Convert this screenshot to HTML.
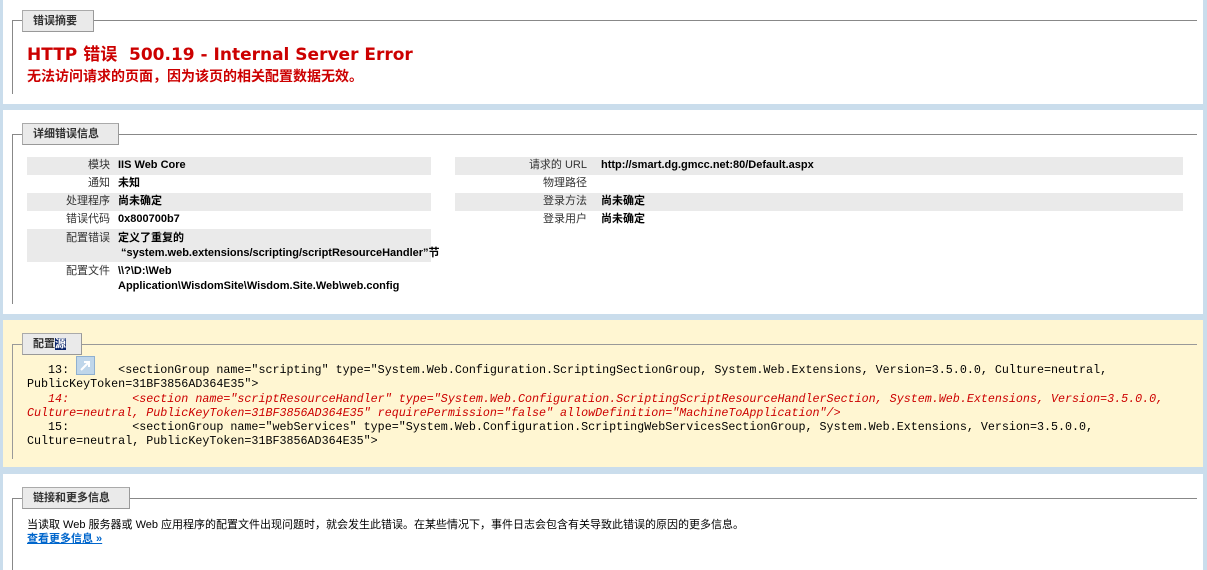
<!DOCTYPE html>
<html><head><meta charset="utf-8"><style>
*{margin:0;padding:0;box-sizing:border-box}
html,body{width:1207px;height:570px;overflow:hidden}
body{background:#CADDEC;position:relative;font-family:"Liberation Sans","Noto Sans CJK SC",sans-serif;font-size:11px;color:#000}
.p{position:absolute;left:3px;width:1200px;background:#fff;overflow:hidden}
.fs{position:absolute;left:9px;width:1185px;border-top:1px solid #888;border-left:1px solid #888}
.lg{position:absolute;background:#EAEAEA;border:1px solid #aaa;border-right-color:#999;border-bottom-color:#999;font-weight:bold;font-size:11px;color:#333;padding-left:10px;line-height:20px;height:22px}
.a{position:absolute;white-space:nowrap}
.row{position:absolute;height:18px;line-height:17px;white-space:nowrap}
.g{background:#EAEAEA}
.l{position:absolute;text-align:right;color:#333;line-height:15px}
.v{position:absolute;font-weight:bold;line-height:15px}
.code{position:absolute;left:27px;font-family:"Liberation Mono",monospace;font-size:11.7px;line-height:14.3px;white-space:pre}
.red{color:#C00;font-style:italic}
</style></head><body>
<div class="p" style="top:0;height:104px">
 <div class="fs" style="top:20px;height:74px"></div>
 <div class="lg" style="left:19px;top:10px;width:72px">错误摘要</div>
 <div class="a" style="left:24px;top:40px;color:#C00;font-weight:bold;font-size:17px;font-family:'DejaVu Sans','Noto Sans CJK SC',sans-serif">HTTP 错误 &nbsp;500.19 - Internal Server Error</div>
 <div class="a" style="left:24px;top:66px;color:#C00;font-weight:bold;font-size:14px">无法访问请求的页面，因为该页的相关配置数据无效。</div>
</div>
<div class="p" style="top:110px;height:204px">
 <div class="fs" style="top:24px;height:170px"></div>
 <div class="lg" style="left:19px;top:13px;width:97px">详细错误信息</div>
</div>
<div class="row g" style="left:27px;top:157px;width:404px"></div>
<div class="row g" style="left:27px;top:193px;width:404px"></div>
<div class="row g" style="left:27px;top:229px;width:404px;height:33px"></div>
<div class="row g" style="left:455px;top:157px;width:728px"></div>
<div class="row g" style="left:455px;top:193px;width:728px"></div>
<div class="l" style="left:30px;width:80px;top:158px">模块</div><div class="v" style="left:118px;top:158px">IIS Web Core</div>
<div class="l" style="left:30px;width:80px;top:176px">通知</div><div class="v" style="left:118px;top:176px">未知</div>
<div class="l" style="left:30px;width:80px;top:194px">处理程序</div><div class="v" style="left:118px;top:194px">尚未确定</div>
<div class="l" style="left:30px;width:80px;top:212px">错误代码</div><div class="v" style="left:118px;top:212px">0x800700b7</div>
<div class="l" style="left:30px;width:80px;top:231px">配置错误</div><div class="v" style="left:118px;top:231px;white-space:nowrap">定义了重复的<br>&nbsp;“system.web.extensions/scripting/scriptResourceHandler”节</div>
<div class="l" style="left:30px;width:80px;top:264px">配置文件</div><div class="v" style="left:118px;top:264px;white-space:nowrap">\\?\D:\Web<br>Application\WisdomSite\Wisdom.Site.Web\web.config</div>
<div class="l" style="left:460px;width:127px;top:158px">请求的 URL</div><div class="v" style="left:601px;top:158px">http://smart.dg.gmcc.net:80/Default.aspx</div>
<div class="l" style="left:460px;width:127px;top:176px">物理路径</div>
<div class="l" style="left:460px;width:127px;top:194px">登录方法</div><div class="v" style="left:601px;top:194px">尚未确定</div>
<div class="l" style="left:460px;width:127px;top:212px">登录用户</div><div class="v" style="left:601px;top:212px">尚未确定</div>
<div class="p" style="top:320px;height:147px;background:#FFF6D2">
 <div class="fs" style="top:24px;height:115px;border-color:#999"></div>
 <div class="lg" style="left:19px;top:13px;width:60px">配置<span style="background:#0A246A;color:#fff">源</span></div>
</div>
<div class="a" style="left:76px;top:356px;width:19px;height:19px;background:#BFD6EA;border:1px solid #8fb0d0"><svg width="17" height="17"><path d="M4 13 L12 5 M7 5 H12 V10" stroke="#fff" stroke-width="2" fill="none"/></svg></div>
<div class="code" style="top:363px">   13:       &lt;sectionGroup name="scripting" type="System.Web.Configuration.ScriptingSectionGroup, System.Web.Extensions, Version=3.5.0.0, Culture=neutral,
PublicKeyToken=31BF3856AD364E35"&gt;
<span class="red">   14:         &lt;section name="scriptResourceHandler" type="System.Web.Configuration.ScriptingScriptResourceHandlerSection, System.Web.Extensions, Version=3.5.0.0,
Culture=neutral, PublicKeyToken=31BF3856AD364E35" requirePermission="false" allowDefinition="MachineToApplication"/&gt;</span>
   15:         &lt;sectionGroup name="webServices" type="System.Web.Configuration.ScriptingWebServicesSectionGroup, System.Web.Extensions, Version=3.5.0.0,
Culture=neutral, PublicKeyToken=31BF3856AD364E35"&gt;</div>
<div class="p" style="top:474px;height:96px">
 <div class="fs" style="top:24px;height:80px"></div>
 <div class="lg" style="left:19px;top:13px;width:108px">链接和更多信息</div>
 <div class="a" style="left:24px;top:42px">当读取 Web 服务器或 Web 应用程序的配置文件出现问题时，就会发生此错误。在某些情况下，事件日志会包含有关导致此错误的原因的更多信息。</div>
 <div class="a" style="left:24px;top:56px;color:#0066CC;font-weight:bold;text-decoration:underline">查看更多信息 »</div>
</div>
</body></html>
